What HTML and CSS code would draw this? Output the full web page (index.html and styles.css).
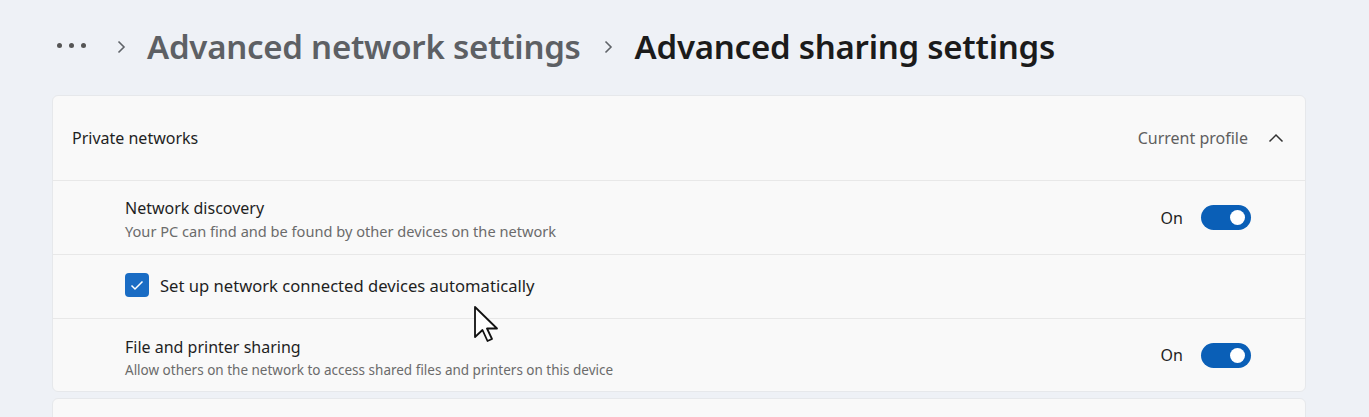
FILE: index.html
```html
<!DOCTYPE html>
<html>
<head>
<meta charset="utf-8">
<link rel="stylesheet" href="styles.css">
</head>
<body>
<div class="page">
  <div class="crumbs">
    <span class="dots"><i></i><i></i><i></i></span>
    <svg class="sep first" width="10" height="14" viewBox="0 0 10 14"><path d="M2.5 1.5 L8 7 L2.5 12.5" fill="none" stroke="#5f6368" stroke-width="1.6"/></svg>
    <span class="crumb">Advanced network settings</span>
    <svg class="sep second" width="10" height="14" viewBox="0 0 10 14"><path d="M2.5 1.5 L8 7 L2.5 12.5" fill="none" stroke="#5f6368" stroke-width="1.6"/></svg>
    <span class="crumb current">Advanced sharing settings</span>
  </div>

  <div class="card">
    <div class="card-head">
      <span class="head-title">Private networks</span>
      <div class="head-right">
        <span class="profile">Current profile</span>
        <svg class="chev" width="16" height="10" viewBox="0 0 16 10"><path d="M1.5 8.5 L8 2 L14.5 8.5" fill="none" stroke="#333" stroke-width="1.5"/></svg>
      </div>
    </div>
    <div class="row">
      <div class="text">
        <div class="title">Network discovery</div>
        <div class="sub wide">Your PC can find and be found by other devices on the network</div>
      </div>
      <div class="ctl"><span class="on">On</span><span class="toggle"><span class="knob"></span></span></div>
    </div>
    <div class="row check-row">
      <span class="check"><svg width="14" height="11" viewBox="0 0 14 11"><path d="M1.5 5.5 L5 9 L12.5 1.5" fill="none" stroke="#fff" stroke-width="1.5"/></svg></span>
      <span class="check-label">Set up network connected devices automatically</span>
    </div>
    <div class="row last">
      <div class="text">
        <div class="title">File and printer sharing</div>
        <div class="sub">Allow others on the network to access shared files and printers on this device</div>
      </div>
      <div class="ctl"><span class="on">On</span><span class="toggle"><span class="knob"></span></span></div>
    </div>
  </div>
  <div class="card next"></div>

  <svg class="cursor" width="26" height="37" viewBox="0 0 26 37"><path d="M1 1 L1 31 L8.5 24 L13.5 35 L18 33 L13 22.5 L23 22.5 Z" fill="#fff" stroke="#111" stroke-width="1.8" stroke-linejoin="round"/></svg>
</div>
</body>
</html>
```
FILE: styles.css
```css
html, body {
  margin: 0;
  padding: 0;
}
body {
  background: #eef1f6;
  font-family: "Noto Sans", "Open Sans", sans-serif;
  color: #1b1b1b;
  width: 1369px;
  height: 417px;
  overflow: hidden;
}
.page {
  position: relative;
  padding: 0 63px 0 52px;
}
.crumbs {
  height: 95px;
  display: flex;
  align-items: center;
  padding-left: 5px;
  box-sizing: border-box;
  padding-bottom: 2px;
}
.dots {
  width: 32px;
  display: flex;
  gap: 7px;
  margin-top: -3px;
}
.dots i {
  width: 5px;
  height: 5px;
  border-radius: 50%;
  background: #555;
  display: block;
}
.sep.first {
  margin: 0 21px 0 27px;
}
.sep.second {
  margin: 0 22px 0 22px;
}
.crumb {
  font-size: 33px;
  font-weight: 600;
  color: #5d6064;
  letter-spacing: -0.25px;
}
.crumb.current {
  color: #1b1b1b;
}
.card {
  background: #f9f9f9;
  border: 1px solid #e6e8eb;
  border-radius: 6px;
  width: 1254px;
  box-sizing: border-box;
}
.card-head {
  height: 85px;
  display: flex;
  align-items: center;
  justify-content: space-between;
  padding: 0 21px 0 19px;
  border-bottom: 1px solid #e8e8e8;
  box-sizing: border-box;
}
.head-title {
  font-size: 16px;
  color: #1f1f1f;
}
.head-right {
  display: flex;
  align-items: center;
  gap: 20px;
}
.profile {
  font-size: 16px;
  color: #5f5f5f;
}
.row {
  display: flex;
  align-items: center;
  justify-content: space-between;
  padding: 0 54px 0 72px;
  height: 74px;
  border-bottom: 1px solid #e8e8e8;
  box-sizing: border-box;
}
.row.last {
  border-bottom: none;
  height: 72px;
}
.text {
  padding-top: 3px;
}
.row.last .text {
  padding-top: 6px;
}
.title {
  font-size: 16px;
  color: #1f1f1f;
  line-height: 22px;
}
.sub {
  font-size: 13.5px;
  color: #6b6b6b;
  line-height: 22px;
  margin-top: 1px;
}
.sub.wide {
  font-size: 14.6px;
}
.ctl {
  display: flex;
  align-items: center;
  gap: 18px;
}
.on {
  font-size: 16px;
  color: #1f1f1f;
}
.toggle {
  width: 50px;
  height: 25px;
  border-radius: 13px;
  background: #0a5fb7;
  position: relative;
  display: block;
}
.knob {
  position: absolute;
  width: 15px;
  height: 15px;
  border-radius: 50%;
  background: #fff;
  right: 6px;
  top: 5px;
}
.check-row {
  height: 64px;
  justify-content: flex-start;
  gap: 11px;
  padding-bottom: 3px;
}
.check {
  width: 24px;
  height: 24px;
  border-radius: 4px;
  background: #1a6cc4;
  display: flex;
  align-items: center;
  justify-content: center;
}
.check-label {
  font-size: 16.6px;
  color: #1f1f1f;
}
.card.next {
  margin-top: 6px;
  height: 40px;
}
.cursor {
  position: absolute;
  left: 474px;
  top: 306px;
}
```
